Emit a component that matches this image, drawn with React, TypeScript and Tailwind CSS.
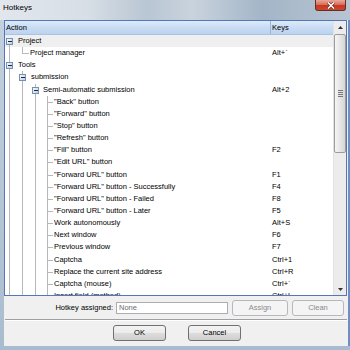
import React from "react";

interface Row {
  t: string;
  l: number;
  b?: boolean;
  k?: string;
}

const rows: Row[] = [
  { t: "Project", l: 0, b: true },
  { t: "Project manager", l: 1, k: "Alt+`" },
  { t: "Tools", l: 0, b: true },
  { t: "submission", l: 1, b: true },
  { t: "Semi-automatic submission", l: 2, b: true, k: "Alt+2" },
  { t: '"Back" button', l: 3 },
  { t: '"Forward" button', l: 3 },
  { t: '"Stop" button', l: 3 },
  { t: '"Refresh" button', l: 3 },
  { t: '"Fill" button', l: 3, k: "F2" },
  { t: '"Edit URL" button', l: 3 },
  { t: '"Forward URL" button', l: 3, k: "F1" },
  { t: '"Forward URL" button - Successfully', l: 3, k: "F4" },
  { t: '"Forward URL" button - Failed', l: 3, k: "F8" },
  { t: '"Forward URL" button - Later', l: 3, k: "F5" },
  { t: "Work autonomously", l: 3, k: "Alt+S" },
  { t: "Next window", l: 3, k: "F6" },
  { t: "Previous window", l: 3, k: "F7" },
  { t: "Captcha", l: 3, k: "Ctrl+1" },
  { t: "Replace the current site address", l: 3, k: "Ctrl+R" },
  { t: "Captcha (mouse)", l: 3, k: "Ctrl+`" },
  { t: "Insert field (method)", l: 3, k: "Ctrl+L" },
];

// column centres of the tree, relative to the list's left edge
const centers = [4, 17, 30, 42];
const buttonText = [13, 26, 38, 50];
const leafText = [11, 25, 37, 49];

// does a branch at this level carry on below row i (list goes on past the view)
function continues(i: number, level: number) {
  for (let j = i + 1; j < rows.length; j++) {
    if (rows[j].l < level) return false;
    if (rows[j].l === level) return true;
  }
  return true;
}

function TreeGutter({ row, i }: { row: Row; i: number }) {
  const width = row.b ? buttonText[row.l] : leafText[row.l];
  const lines: React.ReactNode[] = [];
  for (let l = 0; l < row.l; l++) {
    if (continues(i, l)) {
      const x = centers[l] + 0.5;
      lines.push(<line key={"v" + l} x1={x} x2={x} y1={0} y2={13} />);
    }
  }
  const c = centers[row.l] + 0.5;
  if (i === 0) {
    lines.push(<line key="own" x1={c} x2={c} y1={6} y2={13} />);
  } else if (continues(i, row.l)) {
    lines.push(<line key="own" x1={c} x2={c} y1={0} y2={13} />);
  } else {
    lines.push(<line key="own" x1={c} x2={c} y1={0} y2={6.5} />);
  }
  if (!row.b) {
    lines.push(<line key="h" x1={c} x2={width - 1} y1={6.5} y2={6.5} />);
  }
  return (
    <svg width={width} height={12} className="shrink-0 overflow-visible" shapeRendering="crispEdges">
      <g stroke="#b8b8b8" strokeWidth={1}>{lines}</g>
      {row.b && (
        <g>
          <defs>
            <linearGradient id={"bx" + i} x1="0" y1="0" x2="1" y2="1">
              <stop offset="0" stopColor="#ffffff" />
              <stop offset="1" stopColor="#b9c9dc" />
            </linearGradient>
          </defs>
          <rect x={c - 3} y={3.5} width={6} height={6} fill={`url(#bx${i})`} stroke="#7491b4" />
          <line x1={c - 2} x2={c + 2} y1={6.5} y2={6.5} stroke="#1b2a44" />
        </g>
      )}
    </svg>
  );
}

function Scrollbar() {
  return (
    <div className="w-[13px] flex flex-col bg-[#ececec] border-l border-[#e2e2e2]">
      <div className="h-[13px] flex items-center justify-center">
        <svg width="5" height="3"><polygon points="2.5,0 5,3 0,3" fill="#333" /></svg>
      </div>
      <div className="h-[119px] rounded-[2px] border border-[#9c9c9c] bg-gradient-to-r from-[#f6f6f6] to-[#d6d6d6] flex items-center justify-center">
        <div className="flex flex-col gap-[1px]">
          <div className="w-[5px] h-[1px] bg-[#777]" />
          <div className="w-[5px] h-[1px] bg-[#777]" />
          <div className="w-[5px] h-[1px] bg-[#777]" />
          <div className="w-[5px] h-[1px] bg-[#777]" />
        </div>
      </div>
      <div className="flex-1" />
      <div className="h-[12px] flex items-center justify-center">
        <svg width="5" height="3"><polygon points="0,0 5,0 2.5,3" fill="#333" /></svg>
      </div>
    </div>
  );
}

function Btn({ label, disabled, w }: { label: string; disabled?: boolean; w: string }) {
  return (
    <div
      className={
        disabled
          ? `${w} h-[16px] rounded-[3px] border border-[#b5b9bc] bg-[#f4f4f4] text-[#8a8a8a] flex items-center justify-center`
          : `${w} h-[16px] rounded-[3px] border border-[#707070] bg-[linear-gradient(180deg,#f3f3f3_0%,#ebebeb_50%,#dddddd_51%,#cfcfcf_100%)] flex items-center justify-center`
      }
    >
      {label}
    </div>
  );
}

export default function App() {
  return (
    <div className="w-[350px] h-[350px] overflow-hidden flex flex-col font-['Liberation_Sans',Arial,sans-serif] text-[7.5px] text-black bg-[linear-gradient(180deg,#c5d2de,#a9bccf)]">
      {/* title bar */}
      <div className="h-[20px] flex items-start justify-between bg-[linear-gradient(90deg,#e2e7ed_0%,#d7dee6_25%,#b9c6d3_42%,#c9d3dd_55%,#a3b5c7_75%,#b7c5d3_100%)]">
        <span className="text-[8px] leading-none pl-[3px] pt-[4px]">Hotkeys</span>
        <div className="mr-[4px] w-[31px] h-[11px] rounded-b-[3px] border border-t-0 border-[#6a2d23] bg-[linear-gradient(180deg,#e9a89b_0%,#d8705c_45%,#c63a22_55%,#c9482e_100%)] flex items-center justify-center">
          <svg width="8" height="7" viewBox="0 0 8 7">
            <path d="M1 0.5 L7 6.5 M7 0.5 L1 6.5" stroke="#5a1d14" strokeWidth="2.6" />
            <path d="M1 0.5 L7 6.5 M7 0.5 L1 6.5" stroke="#ffffff" strokeWidth="1.6" />
          </svg>
        </div>
      </div>

      <div className="h-[326px] flex">
        <div className="w-[4px]" />
        <div className="w-[344px] bg-[#f0f0f0] flex flex-col">
          {/* list */}
          <div className="w-[343px] h-[276px] border border-[#5576b8] bg-white flex overflow-hidden">
            <div className="w-[328px] flex flex-col">
              <div className="h-[14px] shrink-0 flex items-center bg-[linear-gradient(180deg,#dcebfb_0%,#c9dcf3_50%,#bcd3ef_100%)] border-b border-[#a9c3e6]">
                <div className="w-[266px] pl-[1px] border-r border-[#9db6d8] h-full flex items-center">Action</div>
                <div className="flex-1 pl-[1px]">Keys</div>
              </div>
              {rows.map((row, i) => (
                <div
                  key={i}
                  className={`h-[12.15px] shrink-0 flex items-start ${i === 0 ? "bg-[#efefef]" : ""}`}
                >
                  <TreeGutter row={row} i={i} />
                  <div className="flex-1 leading-[12px] whitespace-nowrap overflow-hidden">{row.t}</div>
                  <div className="w-[62px] pl-[1px] leading-[12px]">{row.k ?? ""}</div>
                </div>
              ))}
            </div>
            <Scrollbar />
          </div>

          {/* hotkey field */}
          <div className="mt-[4px] h-[16px] flex items-center justify-end gap-[4px] pr-[4px]">
            <span className="mr-[-1px]">Hotkey assigned:</span>
            <div className="w-[112px] h-[12px] border border-[#abadb3] bg-white text-[#6d6d6d] pl-[2px] leading-[10px]">None</div>
            <Btn label="Assign" disabled w="w-[56px]" />
            <Btn label="Clean" disabled w="w-[52px]" />
          </div>

          <div className="mt-[3px] mx-[1px] h-[2px] border-t border-[#a0a0a0] border-b border-b-white" />

          <div className="mt-[4px] flex justify-center gap-[22px] pl-[2px]">
            <Btn label="OK" w="w-[53px]" />
            <Btn label="Cancel" w="w-[53px]" />
          </div>
        </div>
        <div className="w-[2px] bg-[#6f8fc4]" />
      </div>
      <div className="h-[4px]" />
    </div>
  );
}
